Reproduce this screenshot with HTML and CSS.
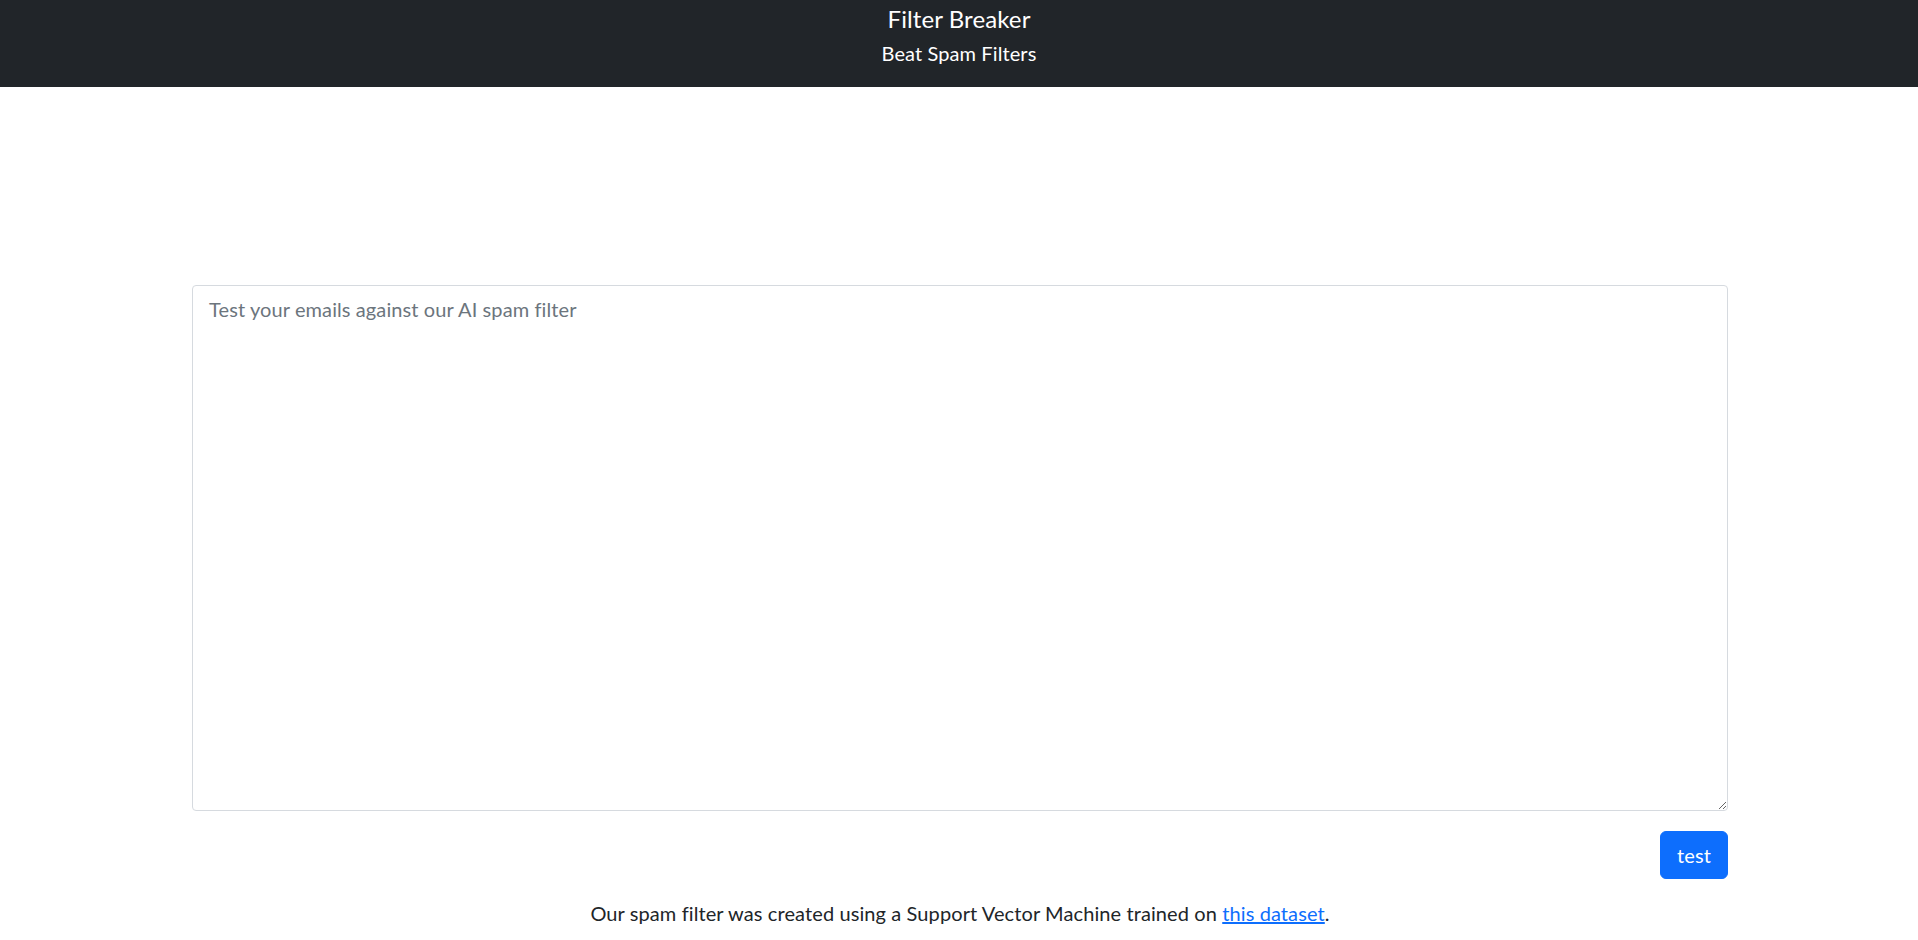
FILE: index.html
```html
<!DOCTYPE html>
<html lang="en">
<head>
<meta charset="utf-8">
<title>Filter Breaker</title>
<link rel="stylesheet" href="styles.css">
</head>
<body>
<header class="topbar">
  <h1 class="title">Filter Breaker</h1>
  <p class="subtitle">Beat Spam Filters</p>
</header>
<main class="content">
  <textarea class="email-input" placeholder="Test your emails against our AI spam filter"></textarea>
  <div class="actions">
    <button class="test-btn" type="button">test</button>
  </div>
  <p class="note">Our spam filter was created using a Support Vector Machine trained on <a href="#" class="note-link">this dataset</a>.</p>
</main>
</body>
</html>
```
FILE: styles.css
```css
* { box-sizing: border-box; }
html, body { margin: 0; padding: 0; }
body {
  font-family: Lato, "Liberation Sans", sans-serif;
  color: #212529;
  background: #fff;
  letter-spacing: 0.1px;
}
.topbar {
  background: #212529;
  color: #fff;
  height: 87px;
  text-align: center;
  padding-top: 5px;
}
.title {
  margin: 0;
  font-size: 24px;
  font-weight: 400;
  line-height: 1.2;
}
.subtitle {
  margin: 4px 0 0;
  font-size: 20px;
  line-height: 1.5;
}
.content {
  margin: 198px 190px 0 192px;
}
.email-input {
  display: block;
  width: 100%;
  height: 526px;
  padding: 8px 16px;
  font-family: inherit;
  font-size: 20px;
  line-height: 1.5;
  letter-spacing: 0.1px;
  color: #212529;
  border: 1px solid #d6dadf;
  border-radius: 4px;
  resize: vertical;
  outline: none;
}
.email-input::placeholder { color: #6c757d; }
.actions {
  display: flex;
  justify-content: flex-end;
  margin-top: 20px;
}
.test-btn {
  font-family: inherit;
  font-size: 20px;
  line-height: 1.5;
  letter-spacing: 0.1px;
  padding: 8px 16px;
  color: #fff;
  background: #0d6efd;
  border: 1px solid #0d6efd;
  border-radius: 6px;
}
.note {
  margin: 19px 0 0;
  text-align: center;
  font-size: 20px;
  line-height: 1.5;
}
.note-link { color: #0d6efd; text-decoration: underline; }
```
